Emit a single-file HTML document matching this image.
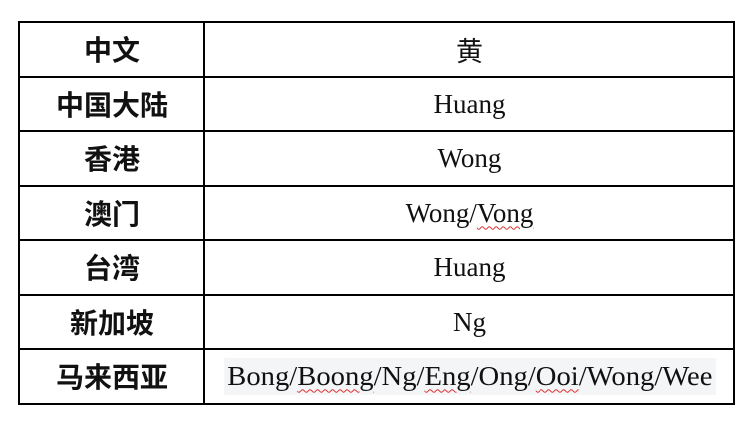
<!DOCTYPE html>
<html><head><meta charset="utf-8"><style>
body{margin:0;width:754px;height:424px;background:#fff;position:relative;overflow:hidden}
.h{position:absolute;left:18px;width:717px;height:2px;background:#000}
.vl{position:absolute;top:21px;height:384px;width:2px;background:#000}
.c{position:absolute;height:54px;display:flex;align-items:center;justify-content:center;color:#111}
.k{left:20px;width:184px;font-family:"Liberation Sans","Noto Sans CJK SC",sans-serif;font-weight:bold;font-size:28px}
.v{left:206px;width:527px;font-family:"Liberation Serif","Noto Serif CJK SC",serif;font-size:27px}
.s{text-decoration:underline wavy #d33;text-decoration-thickness:1px;text-underline-offset:4px}
.bg{background:#f4f5f7;padding:3px 3px;white-space:nowrap;display:inline-block;transform:scaleX(1.06)}
</style></head><body>
<div class="h" style="top:21px"></div>
<div class="h" style="top:76px"></div>
<div class="h" style="top:130px"></div>
<div class="h" style="top:185px"></div>
<div class="h" style="top:239px"></div>
<div class="h" style="top:294px"></div>
<div class="h" style="top:348px"></div>
<div class="h" style="top:403px"></div>
<div class="vl" style="left:18px"></div>
<div class="vl" style="left:203px"></div>
<div class="vl" style="left:733px"></div>

<div class="c k" style="top:22px">中文</div><div class="c v" style="top:22px;font-family:'Noto Sans CJK SC',sans-serif;font-size:27px">黄</div>
<div class="c k" style="top:77px">中国大陆</div><div class="c v" style="top:77px">Huang</div>
<div class="c k" style="top:131px">香港</div><div class="c v" style="top:131px">Wong</div>
<div class="c k" style="top:186px">澳门</div><div class="c v" style="top:186px">Wong/<span class="s">Vong</span></div>
<div class="c k" style="top:240px">台湾</div><div class="c v" style="top:240px">Huang</div>
<div class="c k" style="top:295px">新加坡</div><div class="c v" style="top:295px">Ng</div>
<div class="c k" style="top:349px">马来西亚</div><div class="c v" style="top:349px"><span class="bg">Bong/<span class="s">Boong</span>/Ng/<span class="s">Eng</span>/Ong/<span class="s">Ooi</span>/Wong/Wee</span></div>
</body></html>
